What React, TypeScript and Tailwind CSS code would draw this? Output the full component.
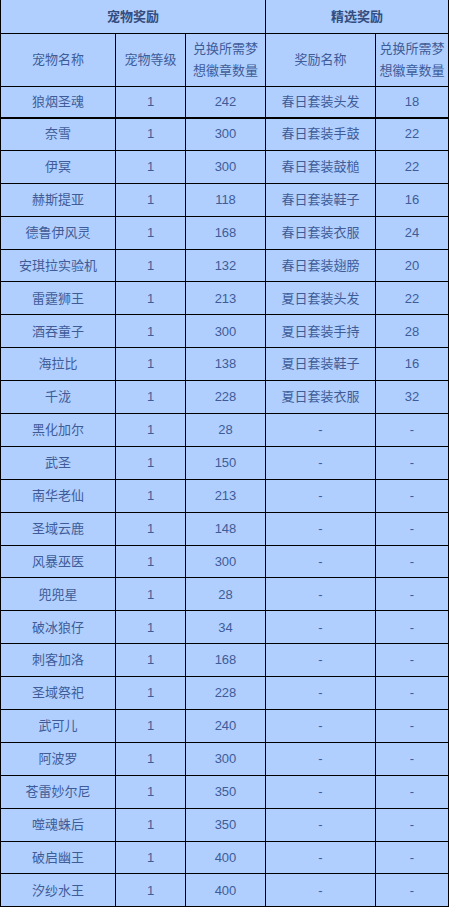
import React from "react";

const pets: [string, number, number, string, string][] = [
  ["奈雪", 1, 300, "春日套装手鼓", "22"],
  ["伊冥", 1, 300, "春日套装鼓槌", "22"],
  ["赫斯提亚", 1, 118, "春日套装鞋子", "16"],
  ["德鲁伊风灵", 1, 168, "春日套装衣服", "24"],
  ["安琪拉实验机", 1, 132, "春日套装翅膀", "20"],
  ["雷霆狮王", 1, 213, "夏日套装头发", "22"],
  ["酒吞童子", 1, 300, "夏日套装手持", "28"],
  ["海拉比", 1, 138, "夏日套装鞋子", "16"],
  ["千泷", 1, 228, "夏日套装衣服", "32"],
  ["黑化加尔", 1, 28, "-", "-"],
  ["武圣", 1, 150, "-", "-"],
  ["南华老仙", 1, 213, "-", "-"],
  ["圣域云鹿", 1, 148, "-", "-"],
  ["风暴巫医", 1, 300, "-", "-"],
  ["兜兜星", 1, 28, "-", "-"],
  ["破冰狼仔", 1, 34, "-", "-"],
  ["刺客加洛", 1, 168, "-", "-"],
  ["圣域祭祀", 1, 228, "-", "-"],
  ["武可儿", 1, 240, "-", "-"],
  ["阿波罗", 1, 300, "-", "-"],
  ["苍雷妙尔尼", 1, 350, "-", "-"],
  ["噬魂蛛后", 1, 350, "-", "-"],
  ["破启幽王", 1, 400, "-", "-"],
  ["汐纱水王", 1, 400, "-", "-"],
];

const td = "border border-black text-center p-0 align-middle";

export default function App() {
  return (
    <div
      className="w-[450px] bg-white overflow-hidden"
      style={{ fontFamily: '"Liberation Sans", "Noto Sans CJK SC", sans-serif' }}
    >
      <table className="w-[449px] border-collapse table-fixed bg-[#b0cffe] text-[13px] text-[#3f5c99] -mt-px">
        <colgroup>
          <col className="w-[115px]" />
          <col className="w-[70px]" />
          <col className="w-[80px]" />
          <col className="w-[110px]" />
          <col className="w-[73px]" />
        </colgroup>
        <tbody>
          <tr className="h-[34px]">
            <td colSpan={3} className={`${td} font-bold text-[#334d80]`}>
              宠物奖励
            </td>
            <td colSpan={2} className={`${td} font-bold text-[#334d80]`}>
              精选奖励
            </td>
          </tr>
          <tr className="h-[53px] leading-[22px]">
            <td className={td}>宠物名称</td>
            <td className={td}>宠物等级</td>
            <td className={td}>
              兑换所需梦
              <br />
              想徽章数量
            </td>
            <td className={td}>奖励名称</td>
            <td className={td}>
              兑换所需梦
              <br />
              想徽章数量
            </td>
          </tr>
          <tr className="h-[31px]">
            <td className={`${td} border-b-2`}>狼烟圣魂</td>
            <td className={`${td} border-b-2`}>1</td>
            <td className={`${td} border-b-2`}>242</td>
            <td className={`${td} border-b-2`}>春日套装头发</td>
            <td className={`${td} border-b-2`}>18</td>
          </tr>
          {pets.map(([name, lv, cost, reward, num]) => (
            <tr key={name} className="h-[32.9px]">
              <td className={td}>{name}</td>
              <td className={td}>{lv}</td>
              <td className={td}>{cost}</td>
              <td className={td}>{reward}</td>
              <td className={td}>{num}</td>
            </tr>
          ))}
        </tbody>
      </table>
    </div>
  );
}
